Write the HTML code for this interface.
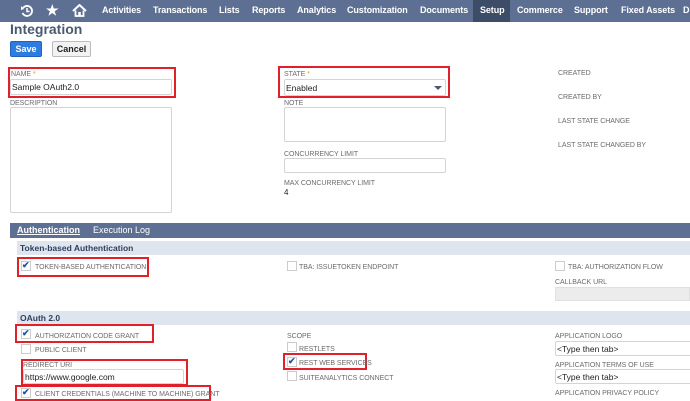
<!DOCTYPE html>
<html><head><meta charset="utf-8"><style>
*{margin:0;padding:0;box-sizing:border-box}
body{width:690px;height:401px;overflow:hidden;background:#fff;font-family:"Liberation Sans",sans-serif;position:relative}
.a{position:absolute;white-space:nowrap}
.nav{position:absolute;left:0;top:0;width:690px;height:22px;background:#5d7093}
.ni{position:absolute;top:5px;color:#fff;font-weight:bold;font-size:9px;letter-spacing:-0.1px}
.lb{position:absolute;font-size:7px;color:#6b6b6b;white-space:nowrap;letter-spacing:-0.05px;margin-top:2px}
.in{position:absolute;border:1px solid #d4d4d4;background:#fff;border-radius:2px}
.rb{position:absolute;border:2px solid #e0202a}
.cb{position:absolute;width:10px;height:10px;border:1px solid #ccc;background:#fff}
.ck{position:absolute;color:#1f4fa8;font-size:9px;font-weight:bold;line-height:10px}
.sh{position:absolute;left:17px;width:673px;height:14px;background:#dfe5ee;font-size:8.5px;font-weight:bold;color:#2d3f5c;padding:2px 0 0 3px}
.tx{position:absolute;font-size:8.5px;color:#222;white-space:nowrap}
</style></head><body>
<div class="nav">
<svg class="a" style="left:20px;top:4px" width="14" height="14" viewBox="0 0 14 14"><path d="M3 4 A5 5 0 1 1 2.5 9" fill="none" stroke="#fff" stroke-width="1.8"/><path d="M1 2 L4 5 L1 6Z" fill="#fff"/><path d="M7 4 V7.5 H9.5" fill="none" stroke="#fff" stroke-width="1.5"/></svg>
<div class="ni" style="left:46px;top:2px;font-size:14px">★</div>
<svg class="a" style="left:72px;top:4px" width="15" height="13" viewBox="0 0 15 13"><path d="M1 7 L7.5 1 L14 7" fill="none" stroke="#fff" stroke-width="2"/><path d="M3.5 6.5 V12 H11.5 V6.5" fill="none" stroke="#fff" stroke-width="1.8"/><rect x="6.2" y="8" width="2.6" height="4" fill="#fff"/></svg>
<div class="ni" style="left:102px">Activities</div>
<div class="ni" style="left:153px">Transactions</div>
<div class="ni" style="left:219px">Lists</div>
<div class="ni" style="left:252px">Reports</div>
<div class="ni" style="left:297px">Analytics</div>
<div class="ni" style="left:347px">Customization</div>
<div class="ni" style="left:420px">Documents</div>
<div class="a" style="left:473px;top:0;width:37px;height:22px;background:#3e4d67"></div>
<div class="ni" style="left:480px">Setup</div>
<div class="ni" style="left:517px">Commerce</div>
<div class="ni" style="left:574px">Support</div>
<div class="ni" style="left:621px">Fixed Assets</div>
<div class="ni" style="left:683px">D</div>
</div>
<div class="a" style="left:10px;top:21px;font-size:14px;font-weight:bold;color:#4a5a72">Integration</div>
<div class="a" style="left:10px;top:41px;width:32px;height:16px;background:#2e7ce0;border:1px solid #1f62c0;border-radius:2px;color:#fff;font-size:9px;font-weight:bold;text-align:center;line-height:14px">Save</div>
<div class="a" style="left:52px;top:41px;width:39px;height:16px;background:#f2f2f2;border:1px solid #bbb;border-radius:2px;color:#222;font-size:9px;font-weight:bold;text-align:center;line-height:14px">Cancel</div>

<div class="rb" style="left:8px;top:67px;width:168px;height:31px"></div>
<div class="lb" style="left:11px;top:69px">NAME <span style="color:#e09a2a">*</span></div>
<div class="in" style="left:10px;top:79px;width:162px;height:16px"></div>
<div class="tx" style="left:12px;top:82px">Sample OAuth2.0</div>
<div class="lb" style="left:10px;top:98px">DESCRIPTION</div>
<div class="in" style="left:10px;top:107px;width:162px;height:106px"></div>

<div class="rb" style="left:278px;top:66px;width:172px;height:32px"></div>
<div class="lb" style="left:284px;top:69px">STATE <span style="color:#e09a2a">*</span></div>
<div class="in" style="left:284px;top:79px;width:162px;height:17px"></div>
<div class="tx" style="left:286px;top:83px">Enabled</div>
<div class="a" style="left:434px;top:86px;width:0;height:0;border-left:4px solid transparent;border-right:4px solid transparent;border-top:4px solid #4a5a72"></div>
<div class="lb" style="left:284px;top:98px">NOTE</div>
<div class="in" style="left:284px;top:107px;width:162px;height:35px"></div>
<div class="lb" style="left:284px;top:149px">CONCURRENCY LIMIT</div>
<div class="in" style="left:284px;top:158px;width:162px;height:15px"></div>
<div class="lb" style="left:284px;top:178px">MAX CONCURRENCY LIMIT</div>
<div class="tx" style="left:284px;top:188px;font-size:8px">4</div>

<div class="lb" style="left:558px;top:68px">CREATED</div>
<div class="lb" style="left:558px;top:92px">CREATED BY</div>
<div class="lb" style="left:558px;top:116px">LAST STATE CHANGE</div>
<div class="lb" style="left:558px;top:140px">LAST STATE CHANGED BY</div>

<div class="a" style="left:10px;top:223px;width:680px;height:15px;background:#5d7093"></div>
<div class="a" style="left:17px;top:225px;font-size:9px;font-weight:bold;color:#fff;text-decoration:underline">Authentication</div>
<div class="a" style="left:93px;top:225px;font-size:9px;color:#fff">Execution Log</div>

<div class="sh" style="top:241px">Token-based Authentication</div>
<div class="rb" style="left:17px;top:257px;width:132px;height:20px"></div>
<div class="cb" style="left:21px;top:261px"></div><div class="ck" style="left:22px;top:260px">✔</div>
<div class="lb" style="left:35px;top:262px">TOKEN-BASED AUTHENTICATION</div>
<div class="cb" style="left:287px;top:261px"></div>
<div class="lb" style="left:299px;top:262px">TBA: ISSUETOKEN ENDPOINT</div>
<div class="cb" style="left:555px;top:261px"></div>
<div class="lb" style="left:568px;top:262px">TBA: AUTHORIZATION FLOW</div>
<div class="lb" style="left:555px;top:277px">CALLBACK URL</div>
<div class="a" style="left:555px;top:287px;width:135px;height:14px;background:#ececec;border:1px solid #e0e0e0"></div>

<div class="sh" style="top:311px">OAuth 2.0</div>
<div class="rb" style="left:15px;top:324px;width:139px;height:19px"></div>
<div class="cb" style="left:21px;top:329px"></div><div class="ck" style="left:22px;top:328px">✔</div>
<div class="lb" style="left:35px;top:331px">AUTHORIZATION CODE GRANT</div>
<div class="cb" style="left:21px;top:344px"></div>
<div class="lb" style="left:35px;top:345px">PUBLIC CLIENT</div>
<div class="rb" style="left:21px;top:359px;width:167px;height:27px"></div>
<div class="lb" style="left:23px;top:360px">REDIRECT URI</div>
<div class="in" style="left:23px;top:369px;width:161px;height:15px"></div>
<div class="tx" style="left:25px;top:372px">https://www.google.com</div>
<div class="rb" style="left:15px;top:385px;width:196px;height:16px"></div>
<div class="cb" style="left:21px;top:388px"></div><div class="ck" style="left:22px;top:387px">✔</div>
<div class="lb" style="left:35px;top:389px">CLIENT CREDENTIALS (MACHINE TO MACHINE) GRANT</div>

<div class="lb" style="left:287px;top:331px">SCOPE</div>
<div class="cb" style="left:287px;top:342px"></div>
<div class="lb" style="left:299px;top:344px">RESTLETS</div>
<div class="rb" style="left:283px;top:353px;width:84px;height:17px"></div>
<div class="cb" style="left:287px;top:357px"></div><div class="ck" style="left:288px;top:356px">✔</div>
<div class="lb" style="left:299px;top:358px">REST WEB SERVICES</div>
<div class="cb" style="left:287px;top:371px"></div>
<div class="lb" style="left:299px;top:373px">SUITEANALYTICS CONNECT</div>

<div class="lb" style="left:555px;top:331px">APPLICATION LOGO</div>
<div class="in" style="left:555px;top:341px;width:140px;height:15px"></div>
<div class="tx" style="left:557px;top:344px">&lt;Type then tab&gt;</div>
<div class="lb" style="left:555px;top:360px">APPLICATION TERMS OF USE</div>
<div class="in" style="left:555px;top:369px;width:140px;height:15px"></div>
<div class="tx" style="left:557px;top:372px">&lt;Type then tab&gt;</div>
<div class="lb" style="left:555px;top:388px">APPLICATION PRIVACY POLICY</div>
</body></html>
